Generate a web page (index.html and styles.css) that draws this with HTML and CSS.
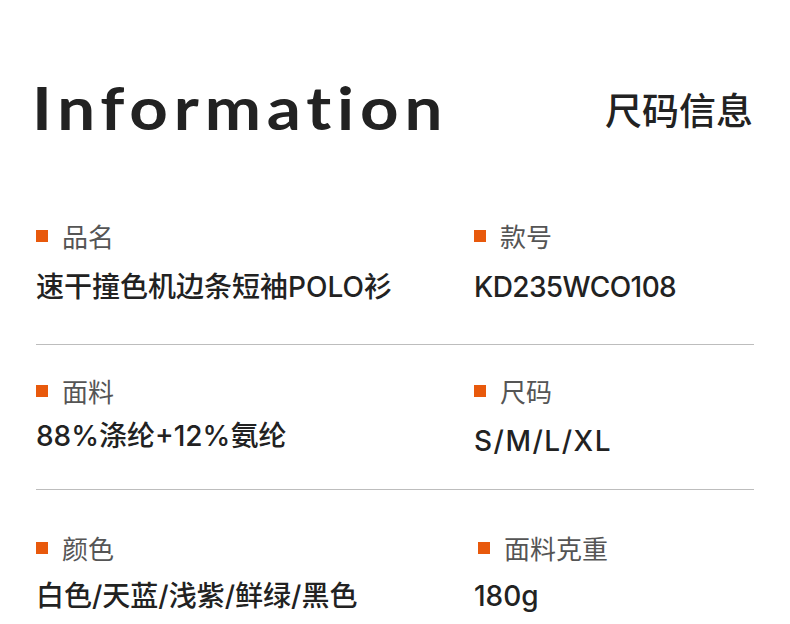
FILE: index.html
```html
<!DOCTYPE html>
<html lang="zh-CN">
<head>
<meta charset="utf-8">
<title>Information 尺码信息</title>
<link rel="stylesheet" href="styles.css">
</head>
<body>
<div class="page">
  <header class="head">
    <h1 class="title-en">Information</h1>
    <h2 class="title-cn">尺码信息</h2>
  </header>

  <section class="row row-1">
    <div class="cell">
      <div class="label"><span class="dot"></span>品名</div>
      <div class="value">速干撞色机边条短袖POLO衫</div>
    </div>
    <div class="cell">
      <div class="label"><span class="dot"></span>款号</div>
      <div class="value value-tight">KD235WCO108</div>
    </div>
  </section>

  <section class="row row-2">
    <div class="cell">
      <div class="label"><span class="dot"></span>面料</div>
      <div class="value">88%涤纶+12%氨纶</div>
    </div>
    <div class="cell">
      <div class="label"><span class="dot"></span>尺码</div>
      <div class="value value-low value-wide">S/M/L/XL</div>
    </div>
  </section>

  <section class="row row-3">
    <div class="cell">
      <div class="label"><span class="dot"></span>颜色</div>
      <div class="value">白色/天蓝/浅紫/鲜绿/黑色</div>
    </div>
    <div class="cell">
      <div class="label label-shift"><span class="dot"></span>面料克重</div>
      <div class="value">180g</div>
    </div>
  </section>
</div>
</body>
</html>
```

FILE: styles.css
```css
* { box-sizing: border-box; }
html, body {
  margin: 0;
  padding: 0;
  background: #ffffff;
}
body {
  font-family: "Inter", "Noto Sans CJK SC", sans-serif;
  color: #222222;
  width: 790px;
  height: 624px;
  overflow: hidden;
}
.page {
  padding: 0 36px;
}
.head {
  display: flex;
  justify-content: space-between;
  align-items: flex-end;
  padding-top: 70px;
  height: 142px;
}
.title-en {
  margin: 0 0 5px -4px;
  font-family: "Lato", sans-serif;
  font-weight: 700;
  font-size: 60px;
  line-height: 60px;
  letter-spacing: 5.2px;
  color: #222222;
  transform: scaleX(1.12);
  transform-origin: left center;
}
.title-cn {
  margin: 0 1px 11px 0;
  font-family: "Noto Sans CJK SC", sans-serif;
  font-weight: 500;
  font-size: 37px;
  line-height: 44px;
  color: #222222;
}
.row {
  display: grid;
  grid-template-columns: 438px 1fr;
  border-bottom: 1px solid #bdbdbd;
}
.row-1 { padding-top: 79px; padding-bottom: 42px; }
.row-2 { padding-top: 31px; padding-bottom: 33px; }
.row-3 { padding-top: 43px; border-bottom: none; }
.cell {
  display: flex;
  flex-direction: column;
}
.row-1 .cell { gap: 21px; }
.row-2 .cell { gap: 15px; }
.row-3 .cell { gap: 18px; }
.label {
  display: flex;
  align-items: center;
  font-family: "Noto Sans CJK SC", sans-serif;
  font-size: 26px;
  line-height: 30px;
  color: #555555;
}
.label-shift { padding-left: 4px; }
.dot {
  width: 12px;
  height: 12px;
  background: #e8590c;
  margin-right: 14px;
  flex: none;
}
.value {
  font-size: 28px;
  line-height: 30px;
  color: #222222;
  font-weight: 500;
}
.value-tight { letter-spacing: -0.6px; }
.value-wide { letter-spacing: 1.5px; }
.value-low { margin-top: 5px; }
```
